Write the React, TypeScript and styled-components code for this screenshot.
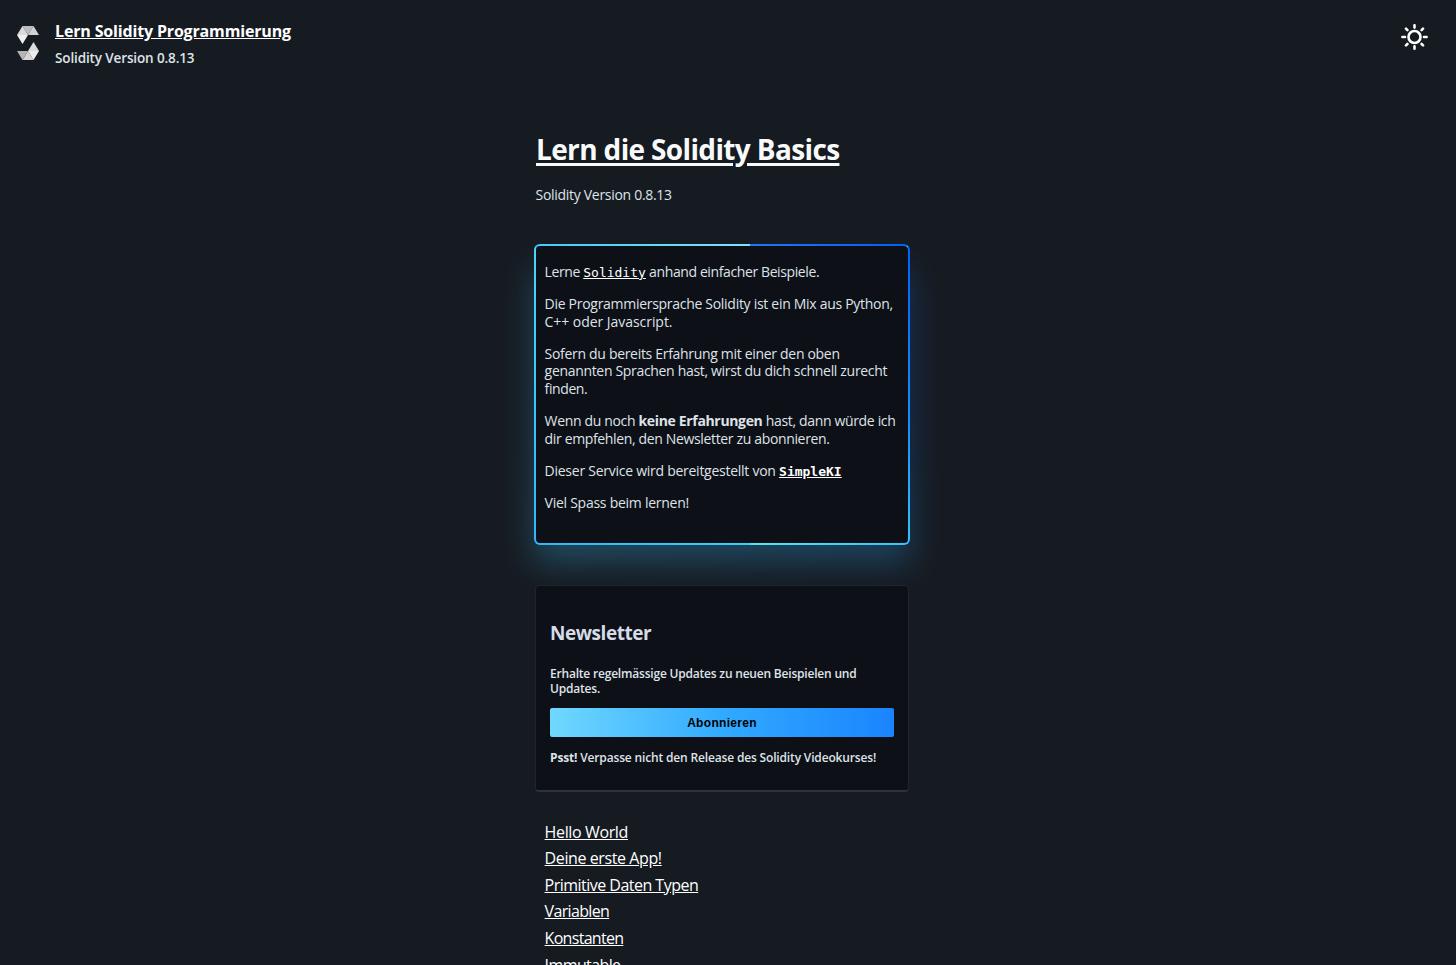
import React, { FC } from 'react';
import styled, { createGlobalStyle } from 'styled-components';

const GlobalStyle = createGlobalStyle`
  html, body {
    margin: 0;
    height: 965px;
    overflow: hidden;
    background-color: #161b22;
  }
`;

const Page = styled.div`
  box-sizing: border-box;
  height: 965px;
  overflow: hidden;
  background-color: #161b22;
  color: #dfe3e8;
  font-family: 'Open Sans', 'Noto Sans', sans-serif;
`;

const Header = styled.header`
  box-sizing: border-box;
  display: flex;
  justify-content: space-between;
  height: 110px;
  padding: 21px 28px 0 17px;
`;

const Brand = styled.div`
  display: flex;
`;

const Logo = styled.svg`
  width: 22px;
  height: 34px;
  margin: 5px 16px 0 0;
`;

const BrandText = styled.div`
  display: flex;
  flex-direction: column;
`;

const Line = styled.span<{ $spacing?: number }>`
  display: block;
  width: max-content;
  white-space: nowrap;
  letter-spacing: ${(props) => props.$spacing || 0}px;
`;

const BrandLink = styled.a`
  height: 28px;
  font-size: 16px;
  font-weight: 700;
  line-height: 20px;
  color: #fff;
  text-decoration: underline;
`;

const BrandVersion = styled.div`
  font-size: 13.5px;
  font-weight: 600;
  line-height: 18px;
`;

const Sun = styled.svg`
  width: 27px;
  height: 27px;
  margin-top: 3px;
`;

const Main = styled.main`
  box-sizing: border-box;
  width: 376px;
  margin-left: 534px;
  isolation: isolate;
`;

const Title = styled.h1`
  height: 38px;
  margin: 20px 0 0 2px;
  font-size: 28px;
  font-weight: 700;
  line-height: 38px;
  color: #f9fafb;
  text-decoration: underline;
  text-decoration-thickness: 3px;
  text-underline-offset: 3px;
`;

const Version = styled.div`
  margin: 17px 0 0 1.6px;
  font-size: 14px;
  line-height: 20px;
`;

const GlowCard = styled.section`
  position: relative;
  box-sizing: border-box;
  height: 301px;
  margin-top: 39px;
  padding: 2px;
  border-radius: 6px;
  background:
    linear-gradient(90deg, #48c8fa, #78e6fa) left top / 216px 2px no-repeat,
    linear-gradient(90deg, #1d78f8, #0060f8) right top / 160px 2px no-repeat,
    linear-gradient(180deg, #4cd4fc, #34b4fc) left top / 2px 100% no-repeat,
    linear-gradient(180deg, #0062fc, #1a8cfc 60%, #34c4fc) right top / 2px 100% no-repeat,
    linear-gradient(90deg, #34b4fc, #38d0f8 57%, #58e4f0 58%, #34c4fc) left bottom / 100% 2px no-repeat,
    #34b4fc;

  &::after {
    content: '';
    position: absolute;
    top: 28px;
    right: 0;
    bottom: -18px;
    left: 0;
    z-index: -1;
    background:
      linear-gradient(0deg, rgba(60, 180, 220, 0.6), rgba(60, 180, 220, 0) 45%),
      linear-gradient(90deg, #34a8d8, #1668d0);
    filter: blur(16px);
    opacity: 0.32;
  }
`;

const Intro = styled.div`
  box-sizing: border-box;
  height: 297px;
  padding: 16.6px 8.6px 0;
  border-radius: 4px;
  background-color: #0d1017;
  font-size: 14px;
  line-height: 17.7px;
`;

const Paragraph = styled.p`
  margin: 0 0 14.5px;
`;

const CodeLink = styled.a<{ $bold?: boolean }>`
  font-family: 'DejaVu Sans Mono', monospace;
  font-size: 13px;
  line-height: 1;
  letter-spacing: 0;
  font-weight: ${(props) => (props.$bold ? 700 : 400)};
  color: #fff;
  text-decoration: underline;
`;

const Newsletter = styled.section`
  box-sizing: border-box;
  width: 374px;
  height: 207px;
  margin: 40px 0 0 1px;
  padding: 34px 14px 0;
  border: 1px solid #20252d;
  border-bottom: 2px solid #2d323b;
  border-radius: 4px;
  background-color: #0d1017;
  font-size: 12px;
  font-weight: 600;
  line-height: 15px;

  b {
    font-weight: 700;
  }
`;

const NewsTitle = styled.h2`
  margin: 0 0 20px;
  font-size: 19px;
  font-weight: 700;
  line-height: 26px;
  color: #d5dce8;
`;

const Subscribe = styled.button`
  display: flex;
  align-items: center;
  justify-content: center;
  width: 344px;
  height: 29px;
  margin: 12px 0 13px;
  padding: 0;
  border: 0;
  border-radius: 2px;
  background: linear-gradient(90deg, #70d8ff, #32aaff 50%, #1a84ff);
  color: #000;
  font-family: 'Liberation Sans', Arial, sans-serif;
  font-size: 12px;
  font-weight: 700;
`;

const Examples = styled.nav`
  display: flex;
  flex-direction: column;
  margin: 26.6px 0 0 10.6px;
`;

const ExampleLink = styled.a`
  height: 26.6px;
  font-size: 16px;
  line-height: 27px;
  color: #fff;
  text-decoration: underline;
`;

const examples = [
  { title: 'Hello World', spacing: -0.37 },
  { title: 'Deine erste App!', spacing: -0.4 },
  { title: 'Primitive Daten Typen', spacing: -0.52 },
  { title: 'Variablen', spacing: -0.66 },
  { title: 'Konstanten', spacing: -0.7 },
  { title: 'Immutable', spacing: -0.6 },
];

const SolidityLogo: FC = () => (
  <Logo viewBox="0 0 22 34">
    <path d="M5.5 0h11L11 9z" fill="#bdbdbd" />
    <path d="M5.5 0 11 9H0z" fill="#dadada" />
    <path d="M16.5 0 22 9H11z" fill="#d2d2d2" />
    <path d="M0 9h11L5.5 18z" fill="#f0f0f0" />
    <path d="M16.5 34h-11L11 25z" fill="#d4d4d4" />
    <path d="M16.5 34 11 25h11z" fill="#ededed" />
    <path d="M5.5 34 0 25h11z" fill="#b4b4b4" />
    <path d="M22 25H11l5.5-9z" fill="#dcdcdc" />
  </Logo>
);

const SunIcon: FC = () => (
  <Sun viewBox="0 0 27 27" fill="none" stroke="#fff" strokeWidth="2.6" strokeLinecap="round">
    <circle cx="13.5" cy="13" r="6" />
    <path d="M13.5 1.2v2.4M13.5 22.4v2.4M1.4 13h2.6M23 13h2.6M5 4.7l1.4 1.4M20.6 20l1.4 1.4M5 21.4 6.4 20M20.6 6.1 22 4.7" />
  </Sun>
);

const App: FC = () => {
  return (
    <>
      <GlobalStyle />
      <Page>
        <Header>
          <Brand>
            <SolidityLogo />
            <BrandText>
              <BrandLink>
                <Line $spacing={-0.16}>Lern Solidity Programmierung</Line>
              </BrandLink>
              <BrandVersion>
                <Line $spacing={-0.13}>Solidity Version 0.8.13</Line>
              </BrandVersion>
            </BrandText>
          </Brand>
          <SunIcon />
        </Header>
        <Main>
          <Title>
            <Line $spacing={-0.64}>Lern die Solidity Basics</Line>
          </Title>
          <Version>
            <Line $spacing={-0.3}>Solidity Version 0.8.13</Line>
          </Version>
          <GlowCard>
            <Intro>
              <Paragraph>
                <Line $spacing={-0.39}>
                  Lerne <CodeLink>Solidity</CodeLink> anhand einfacher Beispiele.
                </Line>
              </Paragraph>
              <Paragraph>
                <Line $spacing={-0.29}>Die Programmiersprache Solidity ist ein Mix aus Python,</Line>
                <Line $spacing={-0.05}>C++ oder Javascript.</Line>
              </Paragraph>
              <Paragraph>
                <Line $spacing={-0.31}>Sofern du bereits Erfahrung mit einer den oben</Line>
                <Line $spacing={-0.32}>genannten Sprachen hast, wirst du dich schnell zurecht</Line>
                <Line $spacing={-0.4}>finden.</Line>
              </Paragraph>
              <Paragraph>
                <Line $spacing={-0.34}>
                  Wenn du noch <b>keine Erfahrungen</b> hast, dann würde ich
                </Line>
                <Line $spacing={-0.35}>dir empfehlen, den Newsletter zu abonnieren.</Line>
              </Paragraph>
              <Paragraph>
                <Line $spacing={-0.26}>
                  Dieser Service wird bereitgestellt von <CodeLink $bold>SimpleKI</CodeLink>
                </Line>
              </Paragraph>
              <Paragraph>
                <Line $spacing={-0.26}>Viel Spass beim lernen!</Line>
              </Paragraph>
            </Intro>
          </GlowCard>
          <Newsletter>
            <NewsTitle>
              <Line $spacing={-0.45}>Newsletter</Line>
            </NewsTitle>
            <Line $spacing={-0.2}>Erhalte regelmässige Updates zu neuen Beispielen und</Line>
            <Line $spacing={-0.2}>Updates.</Line>
            <Subscribe>
              <Line $spacing={0.3}>Abonnieren</Line>
            </Subscribe>
            <Line $spacing={-0.16}>
              <b>Psst!</b> Verpasse nicht den Release des Solidity Videokurses!
            </Line>
          </Newsletter>
          <Examples>
            {examples.map((example) => (
              <ExampleLink key={example.title}>
                <Line $spacing={example.spacing}>{example.title}</Line>
              </ExampleLink>
            ))}
          </Examples>
        </Main>
      </Page>
    </>
  );
};

export default App;
